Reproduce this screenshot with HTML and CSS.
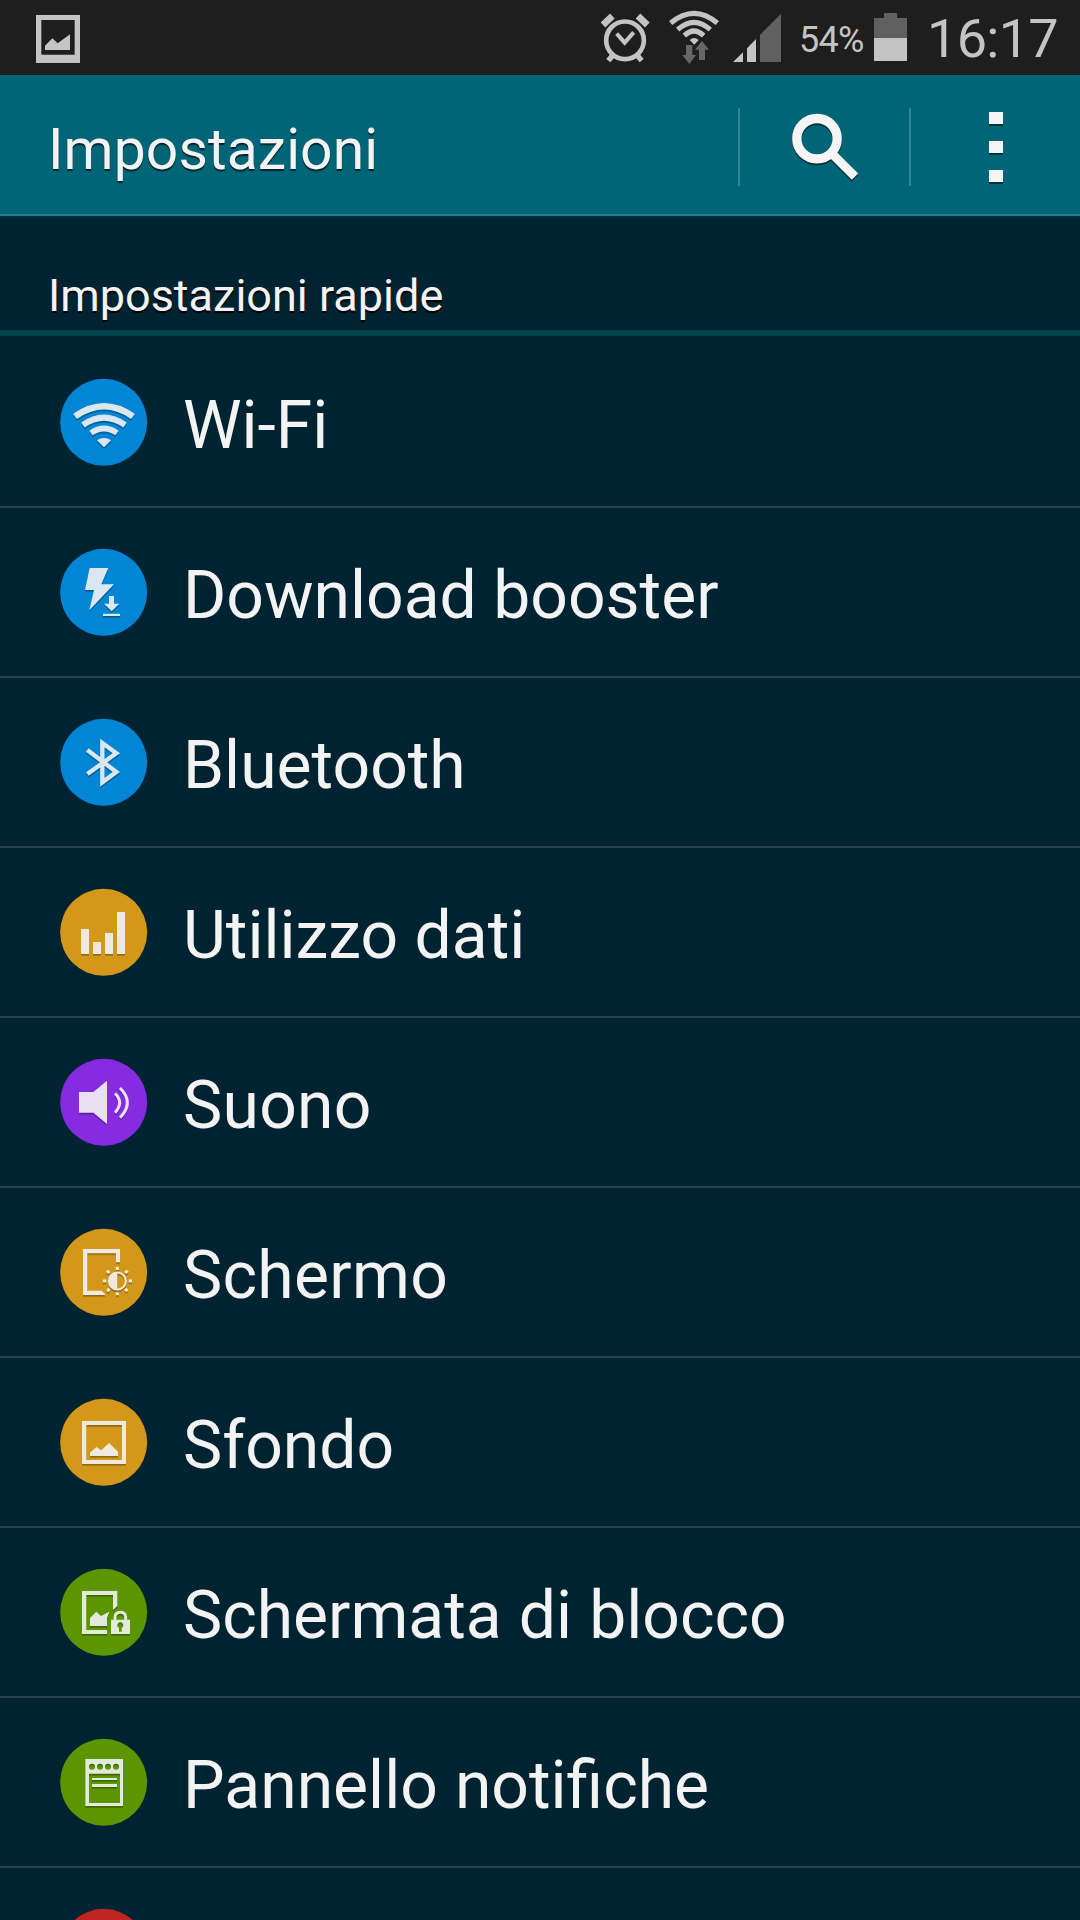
FILE: index.html
```html
<!DOCTYPE html>
<html lang="it">
<head>
<meta charset="utf-8">
<title>Impostazioni</title>
<link rel="stylesheet" href="styles.css">
</head>
<body>
<div class="screen">
  <header class="status-bar">
    <svg class="status-picture" viewBox="108 45 132 144" width="44" height="48">
      <path fill="#c4c4c4" fill-rule="evenodd" d="M108 45H240V189H108ZM124 60V164H224V60Z"/>
      <path fill="#c4c4c4" d="M135 150V137L157 115L173 130L210 103V150Z"/>
    </svg>
    <div class="status-icons">
      <svg viewBox="60 30 546 165" width="182" height="55">
        <g fill="none" stroke="#c4c4c4">
          <circle cx="135" cy="121" r="56.500" stroke-width="14"/>
          <path stroke-width="12" d="M110 101L134 128L161 97"/>
          <path stroke-width="20" d="M69 75L97 48M202 75L174 48"/>
          <path stroke-width="16" d="M99 165L85 182M171 165L185 182"/>
        </g>
        <g fill="none" stroke="#c4c4c4" stroke-width="15">
          <path d="M272 69Q342 11 412 69"/>
          <path d="M293 89Q342 45 391 89"/>
          <path d="M313 107Q342 79 371 107"/>
        </g>
        <path fill="#c4c4c4" d="M329 120Q342 108 356 120L343 134Z"/>
        <path fill="#666" d="M318 135H337V165H348L328 192L307 165H318ZM357 180V149H345L366 123L387 149H375V180Z"/>
        <path fill="#c4c4c4" d="M459 186L489 157V186ZM501 186V145L528 117V186Z"/>
        <path fill="#606060" d="M540 186V104L603 41V186Z"/>
      </svg>
      <span class="battery-level">54%</span>
      <svg class="battery" viewBox="882 39 99 144" width="33" height="48">
        <path fill="#606060" d="M882 54H912V39H951V54H981V114H882Z"/>
        <path fill="#c4c4c4" d="M882 114H981V183H882Z"/>
      </svg>
      <span class="clock">16:17</span>
    </div>
  </header>

  <div class="action-bar">
    <h1 class="title">Impostazioni</h1>
    <div class="action">
      <svg class="raised" viewBox="210 126 210 210" width="70" height="70">
        <circle cx="291" cy="206" r="60.500" fill="none" stroke="#f5f5f5" stroke-width="28"/>
        <path fill="none" stroke="#f5f5f5" stroke-width="27" d="M338 253L405 320"/>
      </svg>
    </div>
    <div class="action overflow">
      <i class="dot"></i><i class="dot"></i><i class="dot"></i>
    </div>
  </div>

  <h2 class="section-title">Impostazioni rapide</h2>

  <ul class="list">
    <li class="row">
      <svg class="icon" viewBox="60 54 264 264">
        <circle cx="191" cy="187" r="130.500" fill="#0086d5"/>
        <g class="glyph glyph-blue">
          <path class="line" stroke-width="19" d="M105 169Q192 108 279 169"/>
          <path class="line" stroke-width="18" d="M129 195Q192 151 255 195"/>
          <path class="line" stroke-width="17" d="M153 219Q192 192 231 219"/>
          <path d="M171 241Q192 227 213 241L192 262Z"/>
        </g>
      </svg>
      <span class="label">Wi-Fi</span>
    </li>
    <li class="row">
      <svg class="icon" viewBox="60 54 264 264">
        <circle cx="191" cy="187" r="130.500" fill="#0086d5"/>
        <g class="glyph glyph-blue">
          <path d="M149 114H205L184 163H222L148 241L162 180H135Z"/>
          <path d="M207 198H222V221H238L215 244L192 221H207ZM189 251H240V258H189Z"/>
        </g>
      </svg>
      <span class="label">Download booster</span>
    </li>
    <li class="row">
      <svg class="icon" viewBox="60 54 264 264">
        <circle cx="191" cy="187" r="130.500" fill="#0086d5"/>
        <g class="glyph glyph-blue">
          <path class="line" stroke-width="13" d="M142 150L229 216L187 247V129L229 160L142 222"/>
        </g>
      </svg>
      <span class="label">Bluetooth</span>
    </li>
    <li class="row">
      <svg class="icon" viewBox="60 54 264 264">
        <circle cx="191" cy="187" r="130.500" fill="#d3981a"/>
        <g class="glyph glyph-amber">
          <path d="M123 177H147V252H123ZM159 216H183V252H159ZM195 189H219V252H195ZM231 126H255V252H231Z"/>
        </g>
      </svg>
      <span class="label">Utilizzo dati</span>
    </li>
    <li class="row">
      <svg class="icon" viewBox="60 564 264 264">
        <circle cx="191" cy="697" r="130.500" fill="#872be2"/>
        <g class="glyph glyph-purple">
          <path d="M117 666H160L201 632V762L160 728H117Z"/>
          <path class="line" stroke-width="9" d="M225 670Q253 698 225 728M240 654Q284 698 240 743"/>
        </g>
      </svg>
      <span class="label loose">Suono</span>
    </li>
    <li class="row">
      <svg class="icon" viewBox="60 54 264 264">
        <circle cx="191" cy="187" r="130.500" fill="#d3981a"/>
        <g class="glyph glyph-amber">
          <path d="M129 117H240V157H228V130H142V242H186L197 255H129Z"/>
          <circle class="line" cx="232" cy="213" r="25.500" stroke-width="6"/>
          <path d="M232 188A25 25 0 0 0 232 238Z"/>
          <path class="line" stroke-width="9" stroke-dasharray="10 67" d="M232 170V256"/>
          <path class="line" stroke-width="9" stroke-dasharray="10 67" d="M189 213H276"/>
          <path class="line" stroke-width="9" stroke-dasharray="10 67" d="M201 182L263 244"/>
          <path class="line" stroke-width="9" stroke-dasharray="10 67" d="M263 182L201 244"/>
        </g>
      </svg>
      <span class="label loose">Schermo</span>
    </li>
    <li class="row">
      <svg class="icon" viewBox="60 564 264 264">
        <circle cx="191" cy="697" r="130.500" fill="#d3981a"/>
        <g class="glyph glyph-amber">
          <path fill-rule="evenodd" d="M126 633H258V762H126ZM139 645V750H246V645Z"/>
          <path d="M150 738V728L169 711L184 721L207 699L234 725V738Z"/>
        </g>
      </svg>
      <span class="label">Sfondo</span>
    </li>
    <li class="row">
      <svg class="icon" viewBox="60 54 264 264">
        <circle cx="191" cy="187" r="130.500" fill="#5b9500"/>
        <g class="glyph glyph-green">
          <path d="M126 123H232V168L219 180V135H139V240H201V252H126Z"/>
          <path d="M150 228V204L169 185L183 198L208 185L201 205V228Z"/>
          <path class="line" stroke-width="9" d="M225 212V202Q225 187 241 187Q257 187 257 202V212"/>
          <path fill-rule="evenodd" d="M213 209H270V252H213ZM237 245H245V234A9 9 0 1 0 237 234Z"/>
        </g>
      </svg>
      <span class="label spaced">Schermata di blocco</span>
    </li>
    <li class="row">
      <svg class="icon" viewBox="60 564 264 264">
        <circle cx="191" cy="697" r="130.500" fill="#5b9500"/>
        <g class="glyph glyph-green">
          <path fill-rule="evenodd" d="M136 627H249V768H136ZM147 671V759H240V671ZM147 650a9 9 0 1 0 18 0a9 9 0 1 0-18 0ZM171 650a9 9 0 1 0 18 0a9 9 0 1 0-18 0ZM195 650a9 9 0 1 0 18 0a9 9 0 1 0-18 0ZM219 650a9 9 0 1 0 18 0a9 9 0 1 0-18 0Z"/>
          <path d="M156 684H231V690H156ZM156 702H231V711H156Z"/>
        </g>
      </svg>
      <span class="label spaced">Pannello notifiche</span>
    </li>
    <li class="row">
      <svg class="icon" viewBox="60 54 264 264">
        <circle cx="191" cy="187" r="130.500" fill="#c12424"/>
      </svg>
    </li>
  </ul>
</div>
</body>
</html>
```
FILE: styles.css
```css
* {
  box-sizing: border-box;
}

body {
  margin: 0;
  background: #002332;
  font-family: Roboto, "Liberation Sans", sans-serif;
}

.screen {
  display: flex;
  flex-direction: column;
  width: 1080px;
  height: 1920px;
  overflow: hidden;
  color: #f3f3f3;
}

svg {
  display: block;
  flex: none;
}

/* Status bar */
.status-bar {
  display: flex;
  flex: none;
  justify-content: space-between;
  height: 75px;
  padding-left: 36px;
  background: #1e1e1e;
  color: #c4c4c4;
}

.status-picture {
  margin-top: 15px;
}

.status-icons {
  display: flex;
  width: 480px;
  padding-top: 10px;
}

.battery-level {
  width: 74px;
  margin-left: 17px;
  padding-top: 9px;
  font-size: 36px;
  line-height: 42px;
  letter-spacing: -0.7px;
}

.battery {
  margin: 3px 20px 0 1px;
}

.clock {
  font-size: 54px;
  line-height: 58px;
  letter-spacing: -0.7px;
  white-space: nowrap;
}

/* Action bar */
.action-bar {
  display: flex;
  flex: none;
  height: 144px;
  border-bottom: 3px solid #002d34;
  background: linear-gradient(#267e88, #267e88) bottom / 100% 2px no-repeat padding-box, #006577;
}

.title {
  flex: 1;
  margin: 0;
  padding: 40px 0 0 48px;
  font-size: 57px;
  font-weight: 400;
  line-height: 70px;
  letter-spacing: 0.1px;
  text-shadow: 0 2px 1px #00252e;
}

.action {
  width: 171px;
  height: 78px;
  margin-top: 33px;
  padding: 4px 0 0 50px;
  border-left: 2px solid #338593;
}

.raised {
  filter: drop-shadow(0 2px 0 #00343f);
}

.overflow {
  display: flex;
  flex-direction: column;
  gap: 17px;
  padding: 4px 0 0 78px;
}

.dot {
  width: 14px;
  height: 12px;
  background: #f5f5f5;
  box-shadow: 0 2px 0 #00343f;
}

/* Section heading */
.section-title {
  flex: none;
  height: 117px;
  margin: 0 0 2px;
  padding: 50px 0 0 48px;
  border-bottom: 6px solid #00434c;
  font-size: 45px;
  font-weight: 400;
  line-height: 54px;
  text-shadow: 0 2px 1px #000;
}

/* Settings list */
.list {
  margin: 0;
  padding: 0;
  list-style: none;
}

.row {
  display: flex;
  align-items: center;
  gap: 35px;
  height: 170px;
  padding-left: 60px;
  border-bottom: 2px solid #29414e;
}

.icon {
  width: 88px;
  height: 88px;
}

.label {
  padding-top: 7px;
  font-size: 66px;
  line-height: 78px;
  white-space: nowrap;
}

.loose {
  letter-spacing: 0.3px;
}

.spaced {
  word-spacing: 0.7px;
}

.glyph {
  filter: drop-shadow(0 5px 1px rgba(0, 0, 0, 0.3));
}

.line {
  fill: none;
}

.glyph-blue {
  fill: #dae7f0;
  stroke: none;
}

.glyph-blue .line {
  stroke: #dae7f0;
}

.glyph-amber {
  fill: #f0e9dd;
}

.glyph-amber .line {
  stroke: #f0e9dd;
}

.glyph-purple {
  fill: #e8dff1;
}

.glyph-purple .line {
  stroke: #e8dff1;
}

.glyph-green {
  fill: #e3eadb;
}

.glyph-green .line {
  stroke: #e3eadb;
}
```
